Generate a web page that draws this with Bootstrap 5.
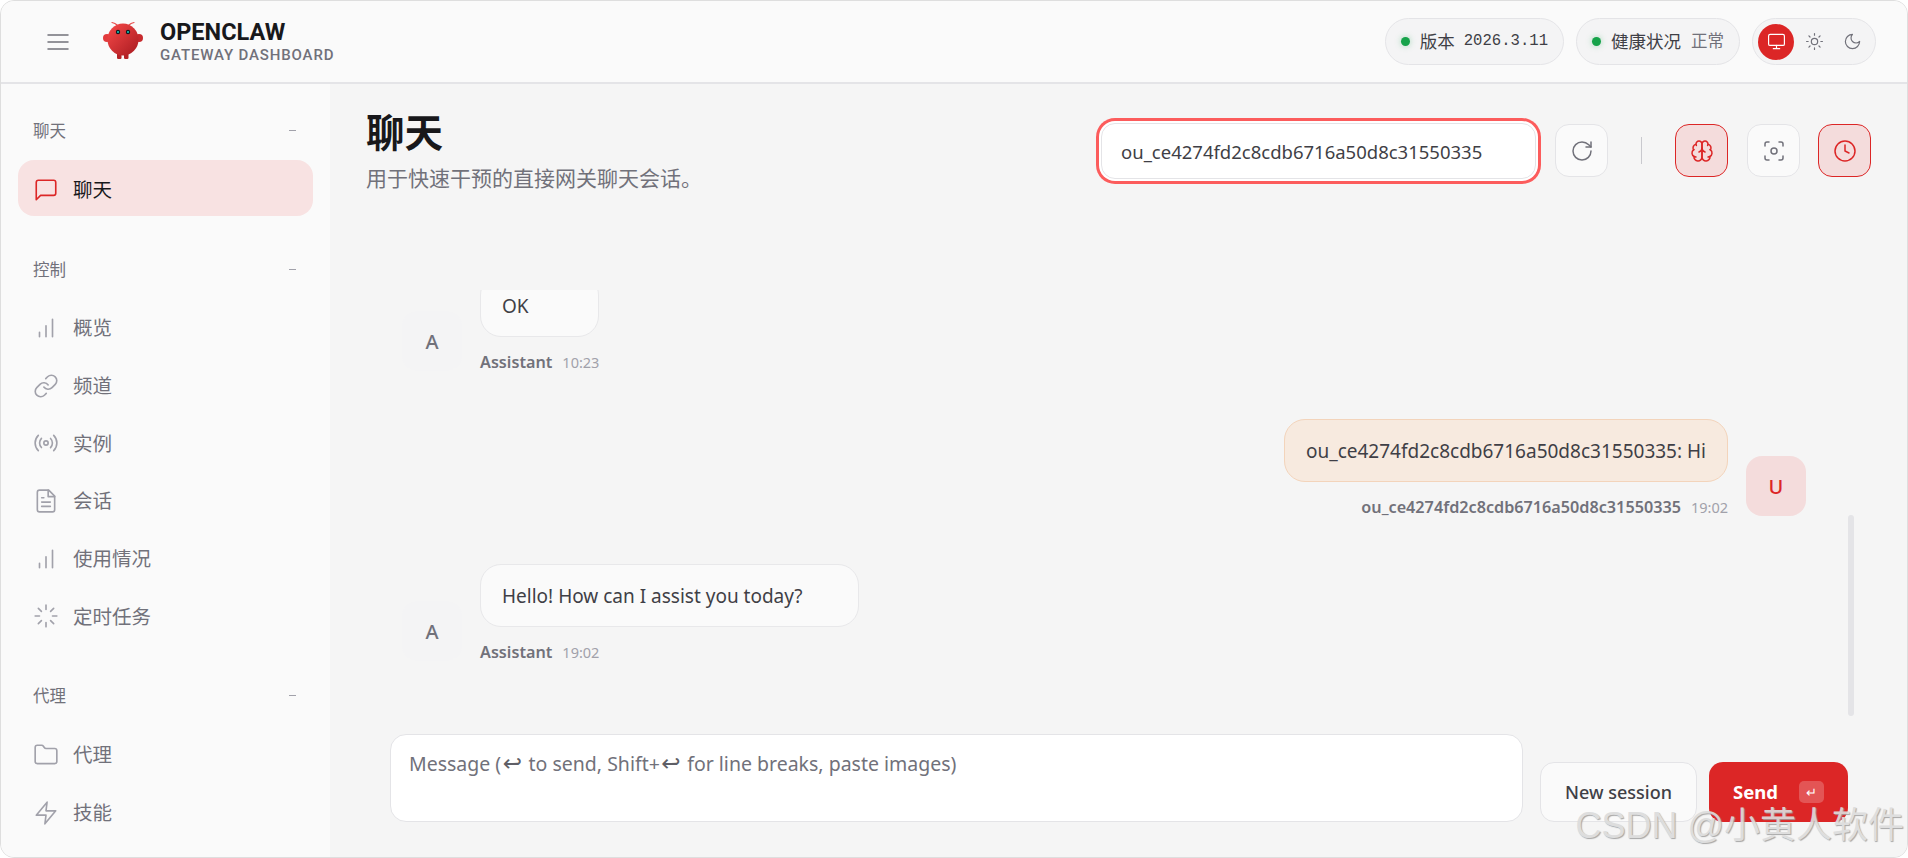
<!DOCTYPE html>
<html lang="zh-CN">
<head>
<meta charset="utf-8">
<title>OpenClaw Gateway Dashboard</title>
<link href="https://cdn.jsdelivr.net/npm/bootstrap@5.3.0/dist/css/bootstrap.min.css" rel="stylesheet">
<style>
html,body{height:858px;margin:0;overflow:hidden;background:#fff}
body{font-family:"Noto Sans","Noto Sans CJK SC",sans-serif;color:#3f3f46;font-size:19px}
.shell{height:858px;border:1px solid #dedede;border-radius:14px;overflow:hidden;background:#f5f5f5;position:relative}
.tbar{height:83px;background:#fafafa;border-bottom:2px solid #e4e4e7;padding:0 31px 0 45px}
.burger{width:24px;height:24px;color:#71717a}
.lgo{width:42px;height:42px;margin-left:33px;margin-right:15px}
.bname{font-family:Roboto,"Noto Sans",sans-serif;font-size:23.5px;font-weight:700;color:#18181b;line-height:27px}
.bsub{font-family:Roboto,"Noto Sans",sans-serif;font-size:15px;font-weight:500;color:#71717a;line-height:18px;letter-spacing:.85px}
.pillx{height:47px;border:1px solid #e4e4e7;border-radius:24px;background:#f4f4f5;padding:0 15px}
.dotx{width:9px;height:9px;border-radius:50%;background:#16a34a;box-shadow:0 0 6px rgba(22,163,74,.35);margin-right:10px}
.ptxt{font-size:17.5px;color:#3f3f46}
.pver{font-family:"Liberation Mono",monospace;font-size:15.6px;margin-left:9px}
.pmut{font-size:16.5px;color:#71717a;margin-left:10px}
.thm{height:47px;border:1px solid #e4e4e7;border-radius:24px;background:#f4f4f5;padding:0 5px;gap:2px}
.tb{width:36px;height:36px;border-radius:50%;color:#71717a}
.tb svg{width:19px;height:19px}
.tb.on{background:#dc2626;color:#fff}
.sbar{width:329px;background:#fafafa;padding:33px 17px 0}
.shead{height:24px;padding:3px 17px 0 15px;margin-bottom:19px;font-size:16.5px;color:#71717a;line-height:21px}
.shead i{display:block;width:7px;height:1px;background:#a1a1aa}
.sgrp{margin-bottom:39.5px}
.nitem{height:56px;border-radius:16px;padding:3px 15px 0;margin-bottom:1.7px;color:#71717a;font-size:19.5px;text-decoration:none}
.nitem svg{width:26px;height:26px;margin-right:14px;color:#a1a1aa;flex:none}
.nitem.on{background:#f8e2e2;color:#18181b}
.nitem.on svg{color:#dc2626}
.mainrow{min-height:0}
.mainx{padding:0 0 0 36px;background:#f5f5f5;min-width:0}
.phead{height:206px;padding:24px 36px 0 0}
.ptitle{font-size:38.5px;font-weight:700;color:#18181b;line-height:48px;margin:0}
.psub{font-size:21px;color:#71717a;line-height:28px;margin:8px 0 0}
.tools{padding-top:11px}
.sess{width:435px;height:56px;margin:4px 0 0;border:1px solid #e4e4e7;border-radius:14px;background:#fff;padding:0 17px 0 19px;color:#3f3f46;font-size:18.5px;box-shadow:0 0 0 2px #fff,0 0 0 5px #fc5c5c;outline:0}
.ibtn{width:53px;height:53px;border:1px solid #e4e4e7;border-radius:14px;background:#fafafa;color:#71717a;margin-top:5px;flex:none}
.ibtn svg{width:24px;height:24px}
.ibtn.on{background:#f4dcdc;border-color:#dc2626;color:#dc2626}
.ibtn.first{margin-left:19px}
.ibtn.mid{margin-left:19px;margin-right:18px}
.vsep{width:1px;height:27px;background:#c9c9ce;margin:18px 33px 0}
.thread{height:444px;overflow:hidden;margin-left:24px;padding:0 101px 0 12px;position:relative}
.msg{gap:18px;margin-bottom:48px}
.msg:first-child{margin-top:-16px}
.ava{width:60px;height:60px;border-radius:16px;background:#f4f4f5;color:#71717a;font-size:20px;font-weight:500;flex:none;padding-top:2px}
.ava.me{background:#f4dcdc;color:#dc2626}
.mcol{align-items:stretch}
.bub{height:63px;padding:2px 21px 0;border:1px solid #e8e8ea;border-radius:21px;background:#fafafa;font-size:19px;color:#3f3f46;white-space:nowrap}
.bub.me{background:#f7eadf;border-color:#f3d4bb}
.bub.wide{padding-right:55px}
.meta{height:18px;line-height:18px;margin-top:16px;gap:10px;white-space:nowrap}
.who{font-size:16.2px;font-weight:600;color:#71717a}
.tim{font-size:14.5px;color:#a1a1aa}
.sbthumb{position:absolute;right:53px;top:225px;width:6px;height:201px;border-radius:4px;background:#e4e4e7}
.cmp{margin-left:24px;padding-right:59px;gap:17px}
.ta{height:88px;border:1px solid #e4e4e7;border-radius:16px;background:#fff;padding:15px 18px;font-size:19.5px;color:#71717a;line-height:28px;flex:1;white-space:nowrap}
.ta span{font-family:"DejaVu Sans",sans-serif;font-size:23px;line-height:20px;color:#5f5f66;margin:0 1.5px}
.nbtn{width:157px;height:60px;border:1px solid #e4e4e7;border-radius:14px;background:#fafafa;color:#3f3f46;font-size:18px;font-weight:500;flex:none}
.sbtn{width:139px;height:60px;border:0;border-radius:14px;background:#dc2626;color:#fff;font-size:18.5px;font-weight:700;flex:none;gap:21px;margin-left:-5px}
.kb{width:25px;height:22px;border-radius:5px;background:rgba(255,255,255,.22);font-size:13px;font-weight:400;line-height:1}
.wm{position:absolute;right:3px;bottom:8px;font-family:"Liberation Sans","Noto Sans CJK SC",sans-serif;font-size:36px;color:#dcdcdc;text-shadow:1px 1px 1px #a0a0a0;white-space:nowrap;opacity:.92;pointer-events:none;line-height:46px}
svg.ic{fill:none;stroke:currentColor;stroke-width:1.5;stroke-linecap:round;stroke-linejoin:round}
</style>
</head>
<body>
<svg width="0" height="0" class="position-absolute">
<defs>
<symbol id="i-menu" viewBox="0 0 24 24"><path d="M2 5h20M2 12h20M2 19h20"/></symbol>
<symbol id="i-chat" viewBox="0 0 24 24"><path d="M21 15a2 2 0 0 1-2 2H7l-4 4V5a2 2 0 0 1 2-2h14a2 2 0 0 1 2 2z"/></symbol>
<symbol id="i-bars" viewBox="0 0 24 24"><path d="M6 20v-4M12 20V10M18 20V4"/></symbol>
<symbol id="i-link" viewBox="0 0 24 24"><path d="M10 13a5 5 0 0 0 7.54.54l3-3a5 5 0 0 0-7.07-7.07l-1.72 1.71"/><path d="M14 11a5 5 0 0 0-7.54-.54l-3 3a5 5 0 0 0 7.07 7.07l1.71-1.71"/></symbol>
<symbol id="i-radio" viewBox="0 0 24 24"><path d="M4.9 19.1C1 15.2 1 8.8 4.9 4.9"/><path d="M7.8 16.2c-2.3-2.3-2.3-6.1 0-8.5"/><circle cx="12" cy="12" r="2"/><path d="M16.2 7.8c2.3 2.3 2.3 6.1 0 8.5"/><path d="M19.1 4.9C23 8.8 23 15.1 19.1 19"/></symbol>
<symbol id="i-file" viewBox="0 0 24 24"><path d="M14.5 2H6a2 2 0 0 0-2 2v16a2 2 0 0 0 2 2h12a2 2 0 0 0 2-2V7.5L14.5 2z"/><path d="M14 2v6h6M16 13H8M16 17H8M10 9H8"/></symbol>
<symbol id="i-load" viewBox="0 0 24 24"><path d="M12 2v4M12 18v4M4.93 4.93l2.83 2.83M16.24 16.24l2.83 2.83M2 12h4M18 12h4M4.93 19.07l2.83-2.83M16.24 7.76l2.83-2.83"/></symbol>
<symbol id="i-folder" viewBox="0 0 24 24"><path d="M20 20a2 2 0 0 0 2-2V8a2 2 0 0 0-2-2h-7.9a2 2 0 0 1-1.69-.9L9.6 3.9A2 2 0 0 0 7.93 3H4a2 2 0 0 0-2 2v13a2 2 0 0 0 2 2Z"/></symbol>
<symbol id="i-zap" viewBox="0 0 24 24"><path d="M13 2 3 14h9l-1 8 10-12h-9l1-8z"/></symbol>
<symbol id="i-monitor" viewBox="0 0 24 24"><rect x="2" y="3" width="20" height="14" rx="2"/><path d="M8 21h8M12 17v4"/></symbol>
<symbol id="i-sun" viewBox="0 0 24 24"><circle cx="12" cy="12" r="4"/><path d="M12 2v2M12 20v2M4.93 4.93l1.41 1.41M17.66 17.66l1.41 1.41M2 12h2M20 12h2M6.34 17.66l-1.41 1.41M19.07 4.93l-1.41 1.41"/></symbol>
<symbol id="i-moon" viewBox="0 0 24 24"><path d="M12 3a6 6 0 0 0 9 9 9 9 0 1 1-9-9Z"/></symbol>
<symbol id="i-rot" viewBox="0 0 24 24"><path d="M21 12a9 9 0 1 1-9-9c2.52 0 4.93 1 6.74 2.74L21 8"/><path d="M21 3v5h-5"/></symbol>
<symbol id="i-brain" viewBox="0 0 24 24"><path d="M12 5a3 3 0 1 0-5.997.125 4 4 0 0 0-2.526 5.77 4 4 0 0 0 .556 6.588A4 4 0 1 0 12 18Z"/><path d="M12 5a3 3 0 1 1 5.997.125 4 4 0 0 1 2.526 5.77 4 4 0 0 1-.556 6.588A4 4 0 1 1 12 18Z"/><path d="M15 13a4.5 4.5 0 0 1-3-4 4.5 4.5 0 0 1-3 4"/><path d="M17.599 6.5a3 3 0 0 0 .399-1.375M6.003 5.125A3 3 0 0 0 6.401 6.5M3.477 10.896a4 4 0 0 1 .585-.396M19.938 10.5a4 4 0 0 1 .585.396M6 18a4 4 0 0 1-1.967-.516M19.967 17.484A4 4 0 0 1 18 18"/></symbol>
<symbol id="i-scan" viewBox="0 0 24 24"><circle cx="12" cy="12" r="3"/><path d="M3 7V5a2 2 0 0 1 2-2h2M17 3h2a2 2 0 0 1 2 2v2M21 17v2a2 2 0 0 1-2 2h-2M7 21H5a2 2 0 0 1-2-2v-2"/></symbol>
<symbol id="i-clock" viewBox="0 0 24 24"><circle cx="12" cy="12" r="10"/><path d="M12 6v6l4 2"/></symbol>
</defs>
</svg>
<div class="shell d-flex flex-column">
  <header class="tbar d-flex align-items-center flex-shrink-0">
    <svg class="ic burger"><use href="#i-menu"/></svg>
    <svg class="lgo" viewBox="0 0 42 42">
      <defs><linearGradient id="lg" x1="0.1" y1="0.1" x2="0.9" y2="0.9"><stop offset="0" stop-color="#f04545"/><stop offset="1" stop-color="#b01f24"/></linearGradient></defs>
      <path d="M14 4C13 3 11 2 9 1.5M26 4C27 3 29 2 31 1.5" fill="none" stroke="#e8504f" stroke-width="1.2" stroke-linecap="round"/>
      <rect x="14" y="30" width="4.5" height="8" rx="1.2" fill="#b52226"/><rect x="21" y="30" width="4.5" height="8" rx="1.2" fill="#b52226"/>
      <circle cx="4" cy="17" r="4" fill="#e23b3d"/><circle cx="36" cy="17" r="4" fill="#c72a2e"/>
      <ellipse cx="20" cy="18.5" rx="15.5" ry="16" fill="url(#lg)"/>
      <circle cx="15" cy="11" r="2.2" fill="#101820"/><circle cx="25" cy="11" r="2.2" fill="#101820"/>
      <circle cx="15" cy="11" r="1" fill="#14d2c0"/><circle cx="25" cy="11" r="1" fill="#14d2c0"/>
    </svg>
    <div>
      <div class="bname">OPENCLAW</div>
      <div class="bsub">GATEWAY DASHBOARD</div>
    </div>
    <div class="ms-auto d-flex align-items-center gap-2">
      <div class="pillx d-flex align-items-center"><span class="dotx"></span><span class="ptxt">版本</span><span class="pver">2026.3.11</span></div>
      <div class="pillx d-flex align-items-center mx-1"><span class="dotx"></span><span class="ptxt">健康状况</span><span class="pmut">正常</span></div>
      <div class="thm d-flex align-items-center">
        <span class="tb on d-flex align-items-center justify-content-center"><svg class="ic"><use href="#i-monitor"/></svg></span>
        <span class="tb d-flex align-items-center justify-content-center"><svg class="ic"><use href="#i-sun"/></svg></span>
        <span class="tb d-flex align-items-center justify-content-center"><svg class="ic"><use href="#i-moon"/></svg></span>
      </div>
    </div>
  </header>
  <div class="mainrow d-flex flex-grow-1">
    <aside class="sbar flex-shrink-0 overflow-hidden">
      <div class="sgrp">
        <div class="shead d-flex justify-content-between align-items-center"><span>聊天</span><i></i></div>
        <a class="nitem on d-flex align-items-center"><svg class="ic"><use href="#i-chat"/></svg>聊天</a>
      </div>
      <div class="sgrp">
        <div class="shead d-flex justify-content-between align-items-center"><span>控制</span><i></i></div>
        <a class="nitem d-flex align-items-center"><svg class="ic"><use href="#i-bars"/></svg>概览</a>
        <a class="nitem d-flex align-items-center"><svg class="ic"><use href="#i-link"/></svg>频道</a>
        <a class="nitem d-flex align-items-center"><svg class="ic"><use href="#i-radio"/></svg>实例</a>
        <a class="nitem d-flex align-items-center"><svg class="ic"><use href="#i-file"/></svg>会话</a>
        <a class="nitem d-flex align-items-center"><svg class="ic"><use href="#i-bars"/></svg>使用情况</a>
        <a class="nitem d-flex align-items-center"><svg class="ic"><use href="#i-load"/></svg>定时任务</a>
      </div>
      <div class="sgrp">
        <div class="shead d-flex justify-content-between align-items-center"><span>代理</span><i></i></div>
        <a class="nitem d-flex align-items-center"><svg class="ic"><use href="#i-folder"/></svg>代理</a>
        <a class="nitem d-flex align-items-center"><svg class="ic"><use href="#i-zap"/></svg>技能</a>
      </div>
    </aside>
    <main class="mainx flex-grow-1 d-flex flex-column">
      <div class="phead d-flex align-items-start">
        <div>
          <h1 class="ptitle">聊天</h1>
          <p class="psub">用于快速干预的直接网关聊天会话。</p>
        </div>
        <div class="tools ms-auto d-flex align-items-start">
          <input class="sess" value="ou_ce4274fd2c8cdb6716a50d8c31550335">
          <span class="ibtn first d-flex align-items-center justify-content-center"><svg class="ic"><use href="#i-rot"/></svg></span>
          <span class="vsep"></span>
          <span class="ibtn on d-flex align-items-center justify-content-center"><svg class="ic"><use href="#i-brain"/></svg></span>
          <span class="ibtn mid d-flex align-items-center justify-content-center"><svg class="ic"><use href="#i-scan"/></svg></span>
          <span class="ibtn on d-flex align-items-center justify-content-center"><svg class="ic"><use href="#i-clock"/></svg></span>
        </div>
      </div>
      <div class="thread">
        <div class="msg d-flex align-items-end">
          <div class="ava d-flex align-items-center justify-content-center">A</div>
          <div class="mcol d-flex flex-column">
            <div class="bub d-flex align-items-center">OK</div>
            <div class="meta d-flex align-items-center"><span class="who">Assistant</span><span class="tim">10:23</span></div>
          </div>
        </div>
        <div class="msg d-flex align-items-end justify-content-end">
          <div class="d-flex flex-column align-items-end">
            <div class="bub me d-flex align-items-center">ou_ce4274fd2c8cdb6716a50d8c31550335: Hi</div>
            <div class="meta d-flex align-items-center"><span class="who">ou_ce4274fd2c8cdb6716a50d8c31550335</span><span class="tim">19:02</span></div>
          </div>
          <div class="ava me d-flex align-items-center justify-content-center">U</div>
        </div>
        <div class="msg d-flex align-items-end">
          <div class="ava d-flex align-items-center justify-content-center">A</div>
          <div class="d-flex flex-column align-items-start">
            <div class="bub wide d-flex align-items-center">Hello! How can I assist you today?</div>
            <div class="meta d-flex align-items-center"><span class="who">Assistant</span><span class="tim">19:02</span></div>
          </div>
        </div>
        <div class="sbthumb"></div>
      </div>
      <div class="cmp d-flex align-items-end">
        <div class="ta">Message (<span>↩</span> to send, Shift+<span>↩</span> for line breaks, paste images)</div>
        <button class="nbtn btn p-0 d-flex align-items-center justify-content-center">New session</button>
        <button class="sbtn btn p-0 d-flex align-items-center justify-content-center">Send<span class="kb d-flex align-items-center justify-content-center">↵</span></button>
      </div>
    </main>
  </div>
  <div class="wm">CSDN @小黄人软件</div>
</div>
</body>
</html>
